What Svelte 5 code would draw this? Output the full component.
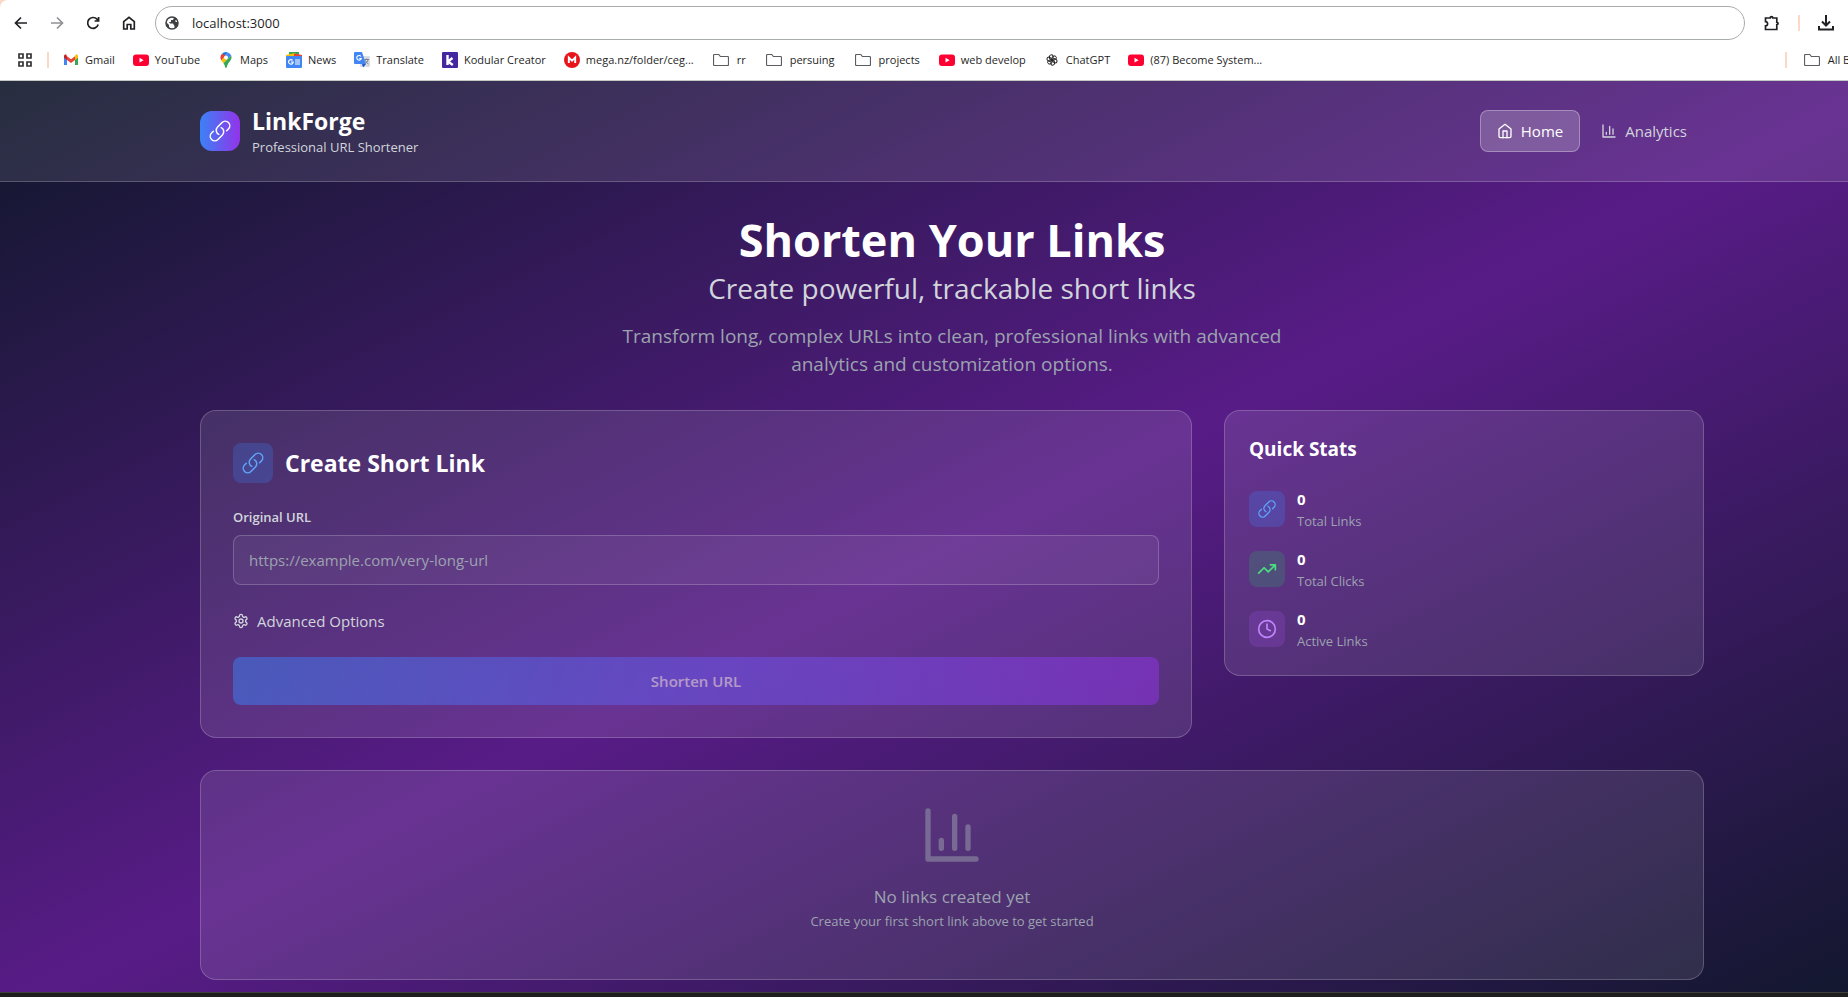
<script>
  const bookmarks = [
    { icon: 'gmail', label: 'Gmail' },
    { icon: 'youtube', label: 'YouTube' },
    { icon: 'maps', label: 'Maps' },
    { icon: 'news', label: 'News' },
    { icon: 'translate', label: 'Translate' },
    { icon: 'kodular', label: 'Kodular Creator' },
    { icon: 'mega', label: 'mega.nz/folder/ceg...' },
    { icon: 'folder', label: 'rr' },
    { icon: 'folder', label: 'persuing' },
    { icon: 'folder', label: 'projects' },
    { icon: 'youtube', label: 'web develop' },
    { icon: 'chatgpt', label: 'ChatGPT' },
    { icon: 'youtube', label: '(87) Become System...' }
  ];

  const stats = [
    { icon: 'link', tone: 'blue', value: 0, label: 'Total Links' },
    { icon: 'trend', tone: 'green', value: 0, label: 'Total Clicks' },
    { icon: 'clock', tone: 'purple', value: 0, label: 'Active Links' }
  ];

  let address = $state('localhost:3000');
  let url = $state('');
</script>

{#snippet favicon(name)}
  <svg class="favicon" viewBox="0 0 16 16" aria-hidden="true">
    {#if name === 'gmail'}
      <path d="M1 4v9h3V7z" fill="#4285f4" />
      <path d="M12 7v6h3V4z" fill="#34a853" />
      <path d="M12 4.500v3.500l3-2.300V4c0-1.500-1.500-2-2.400-1.200z" fill="#fbbc04" />
      <path d="M4 4.500v3.500L1 5.700V4c0-1.500 1.500-2 2.400-1.200z" fill="#c5221f" />
      <path d="M4 4.200l4 3 4-3V8l-4 3-4-3z" fill="#ea4335" />
    {:else if name === 'youtube'}
      <rect x="0" y="2.500" width="16" height="11.500" rx="3" fill="#ff0033" />
      <path d="M6.500 5.800v4.800L10.600 8.200z" fill="#fff" />
    {:else if name === 'maps'}
      <path d="M8 0a5.500 5.500 0 0 0-4.200 2L6 4.500 10 .4A5.500 5.500 0 0 0 8 0z" fill="#1a73e8" />
      <path d="M3.800 2A5.500 5.500 0 0 0 3.400 8.500L8.200 3z" fill="#ea4335" />
      <path d="M10 .4L6.500 4.300 9.500 7.200 13.200 3.500A5.500 5.500 0 0 0 10 .4z" fill="#4285f4" />
      <path d="M3.400 8.500L5.500 11.200 9.800 6.800 6.500 4.500z" fill="#fbbc04" />
      <path d="M13.200 3.500L5.500 11.200C7 13 7 16 8 16s1-3 2.700-5.200C12.500 8.500 14.300 6.500 13.200 3.500z" fill="#34a853" />
      <circle cx="8" cy="5.500" r="2" fill="#fff" />
    {:else if name === 'news'}
      <path d="M3 0h10v5H3z" fill="#34a853" />
      <path d="M0 3l9-2 2 4H0z" fill="#fbbc04" />
      <path d="M8 1.500l8 1.500v3H8z" fill="#ea4335" />
      <rect x="0" y="4" width="16" height="12" rx="1" fill="#4285f4" />
      <path d="M6.600 8.300A2.300 2.300 0 1 0 7.200 10H5M9 8h5M9 10h5M9 12h5" fill="none" stroke="#fff" stroke-width="1.200" />
    {:else if name === 'translate'}
      <rect x="6" y="4" width="10" height="11" rx="1" fill="#dadce0" />
      <path d="M1 0h7l4 12H1a1 1 0 0 1-1-1V1a1 1 0 0 1 1-1z" fill="#4285f4" />
      <path d="M8 12h4l-3 3.500z" fill="#1a57c8" />
      <path d="M7 4.500A2.300 2.300 0 1 0 7.300 6.500H5.300" fill="none" stroke="#fff" stroke-width="1.100" />
      <path d="M10.500 7.500h4.500M12.700 6.500v1M14 8c-.5 2-2 3-3 3.500M11.500 8.500c.5 1.500 2 3 3 3.500" fill="none" stroke="#6b7785" stroke-width=".9" />
    {:else if name === 'kodular'}
      <rect width="16" height="16" rx="1" fill="#4527a0" />
      <path d="M5.500 3v10M10.500 6L6 9.500l4.800 3.500" fill="none" stroke="#fff" stroke-width="2.400" />
    {:else if name === 'mega'}
      <circle cx="8" cy="8" r="8" fill="#e8141c" />
      <path d="M4.800 11V5.500L8 8.700l3.200-3.200V11" fill="none" stroke="#fff" stroke-width="1.900" />
    {:else if name === 'chatgpt'}
      <g fill="none" stroke="#222" stroke-width="1">
        {#each [0, 60, 120, 180, 240, 300] as turn}
          <path d="M8 8V5.300l1.900-1.300a1.900 1.900 0 0 1 2.200 2.800L9.300 8.600" transform="rotate({turn} 8 8)" />
        {/each}
      </g>
    {:else}
      <path d="M1.500 2.500h4.300l1.600 2h7.100a1 1 0 0 1 1 1v7a1 1 0 0 1-1 1h-13a1 1 0 0 1-1-1v-9a1 1 0 0 1 1-1z" fill="none" stroke="#5a5d61" stroke-width="1.200" />
    {/if}
  </svg>
{/snippet}

{#snippet icon(name)}
  <svg class="icon" viewBox="0 0 24 24" aria-hidden="true">
    {#if name === 'link'}
      <path d="M13.190 8.688a4.500 4.500 0 0 1 1.242 7.244l-4.500 4.500a4.500 4.500 0 0 1-6.364-6.364l1.757-1.757m13.350-.622l1.757-1.757a4.500 4.500 0 0 0-6.364-6.364l-4.500 4.500a4.500 4.500 0 0 0 1.242 7.244" />
    {:else if name === 'home'}
      <path d="M3 9l9-7 9 7v11a2 2 0 0 1-2 2H5a2 2 0 0 1-2-2z" />
      <path d="M9 22V12h6v10" />
    {:else if name === 'chart'}
      <path d="M3 3v18h18M8 17v-3M13 17V5M18 17V9" />
    {:else if name === 'trend'}
      <path d="M22 7l-8.500 8.500-5-5L2 17M16 7h6v6" />
    {:else if name === 'clock'}
      <circle cx="12" cy="12" r="10" />
      <path d="M12 6v6l4 2" />
    {:else if name === 'settings'}
      <path d="M12.220 2h-.44a2 2 0 0 0-2 2v.18a2 2 0 0 1-1 1.730l-.43.25a2 2 0 0 1-2 0l-.15-.08a2 2 0 0 0-2.730.73l-.22.38a2 2 0 0 0 .73 2.730l.15.1a2 2 0 0 1 1 1.720v.51a2 2 0 0 1-1 1.740l-.15.09a2 2 0 0 0-.73 2.730l.22.38a2 2 0 0 0 2.730.73l.15-.08a2 2 0 0 1 2 0l.43.25a2 2 0 0 1 1 1.730V20a2 2 0 0 0 2 2h.44a2 2 0 0 0 2-2v-.18a2 2 0 0 1 1-1.730l.43-.25a2 2 0 0 1 2 0l.15.08a2 2 0 0 0 2.730-.73l.22-.39a2 2 0 0 0-.73-2.730l-.15-.08a2 2 0 0 1-1-1.740v-.5a2 2 0 0 1 1-1.740l.15-.09a2 2 0 0 0 .73-2.730l-.22-.38a2 2 0 0 0-2.730-.73l-.15.08a2 2 0 0 1-2 0l-.43-.25a2 2 0 0 1-1-1.730V4a2 2 0 0 0-2-2z" />
      <circle cx="12" cy="12" r="3" />
    {/if}
  </svg>
{/snippet}

<div class="window">
  <div class="chrome">
    <div class="toolbar">
      <button class="tool" aria-label="Back">
        <svg viewBox="0 0 16 16"><path d="M14 8H3M8 2.500L2.500 8 8 13.500" /></svg>
      </button>
      <button class="tool muted" aria-label="Forward">
        <svg viewBox="0 0 16 16"><path d="M2 8h11M8 2.500L13.500 8 8 13.500" /></svg>
      </button>
      <button class="tool" aria-label="Reload">
        <svg viewBox="0 0 16 16"><path d="M13.200 9.500A5.400 5.400 0 1 1 12 4.200L13.300 5.700M13.600 2v4H9.600" /></svg>
      </button>
      <button class="tool" aria-label="Home page">
        <svg viewBox="0 0 16 16"><path d="M2.700 6.700L8 2.300l5.300 4.400v7.300H9.800V9.500H6.200V14H2.700z" /></svg>
      </button>
      <label class="address">
        <svg viewBox="0 0 16 16" aria-hidden="true">
          <circle cx="8" cy="8" r="6" fill="none" stroke="#3c4043" stroke-width="1.500" />
          <path d="M2 7l3 3v2l2 2C4 14 2 11 2 7zM9 2l1 1-1 2H7v2H5l1 1.500h3L10.500 11v2.500C13 12.500 14.500 9.500 14 7h-2l-1-1 2-2C12 2.500 10.500 2 9 2z" fill="#3c4043" />
        </svg>
        <input aria-label="Address" bind:value={address} />
      </label>
      <button class="tool" aria-label="Extensions">
        <svg viewBox="0 0 16 16"><path d="M1.500 3h4.700a1.300 1.300 0 0 1 2.600 0h4v4.300a1.300 1.300 0 0 1 0 2.600v4.600H1.500v-3.700a2.100 2.100 0 0 0 0-4.200z" /></svg>
      </button>
      <span class="rule"></span>
      <button class="tool" aria-label="Downloads">
        <svg class="heavy" viewBox="0 0 16 16"><path d="M8 0v10M4 6.500L8 10.500l4-4M1 11v3.500h14V11" /></svg>
      </button>
    </div>
    <div class="bookmarks">
      <button class="mark apps" aria-label="Apps">
        <svg class="favicon" viewBox="0 0 16 16"><path d="M2 2h4v4H2zM10 2h4v4h-4zM2 10h4v4H2zM10 10h4v4h-4z" fill="none" stroke="#333" stroke-width="1.700" /></svg>
      </button>
      <span class="rule"></span>
      {#each bookmarks as mark}
        <a class="mark" class:folder={mark.icon === 'folder'} href="#top">
          {@render favicon(mark.icon)}{mark.label}
        </a>
      {/each}
      <span class="rule last"></span>
      <button class="mark folder all">{@render favicon('folder')}All Bookmarks</button>
    </div>
  </div>

  <div class="viewport">
    <div class="page" id="top">
      <header>
        <div class="container bar">
          <div class="brand">
            <span class="logo">{@render icon('link')}</span>
            <div>
              <div class="name">LinkForge</div>
              <div class="tagline">Professional URL Shortener</div>
            </div>
          </div>
          <nav>
            <a class="active" href="#top">{@render icon('home')}Home</a>
            <a href="#top">{@render icon('chart')}Analytics</a>
          </nav>
        </div>
      </header>

      <main class="container">
        <section class="hero">
          <h1>Shorten Your Links</h1>
          <p class="lead">Create powerful, trackable short links</p>
          <p class="intro">Transform long, complex URLs into clean, professional links with advanced analytics and customization options.</p>
        </section>

        <div class="grid">
          <form class="card create" onsubmit={(event) => event.preventDefault()}>
            <div class="heading">
              <span class="badge blue">{@render icon('link')}</span>
              <h2>Create Short Link</h2>
            </div>
            <label class="caption" for="url">Original URL</label>
            <input id="url" class="field" type="url" placeholder="https://example.com/very-long-url" bind:value={url} />
            <button class="advanced" type="button">{@render icon('settings')}Advanced Options</button>
            <button class="submit" type="submit" disabled={!url}>Shorten URL</button>
          </form>

          <aside class="card stats">
            <h3>Quick Stats</h3>
            {#each stats as stat}
              <div class="stat">
                <span class="badge small {stat.tone}">{@render icon(stat.icon)}</span>
                <div>
                  <div class="value">{stat.value}</div>
                  <div class="label">{stat.label}</div>
                </div>
              </div>
            {/each}
          </aside>
        </div>

        <section class="card empty">
          {@render icon('chart')}
          <p class="none">No links created yet</p>
          <p class="hint">Create your first short link above to get started</p>
        </section>
      </main>
    </div>
  </div>
  <div class="taskbar"></div>
</div>

<style>
  :global(body) {
    overflow: hidden;
  }

  .window {
    --bleed: 56px;
    display: flex;
    flex-direction: column;
    width: calc(100% + var(--bleed));
    height: 100vh;
    background: #fbd9c8;
    font-family: 'Open Sans', 'Noto Sans', sans-serif;
    color: #fff;
  }

  .window *,
  .window {
    box-sizing: border-box;
  }

  h1, h2, h3, p {
    margin: 0;
  }

  button,
  input {
    font-family: inherit;
    border: 0;
    background: none;
    padding: 0;
    color: inherit;
  }

  a {
    color: inherit;
    text-decoration: none;
  }

  /* Browser frame */
  .chrome {
    flex: none;
    background: #fff;
    border-bottom: 1px solid #c5c9c4;
    border-top-left-radius: 8px;
    color: #1f1f1f;
  }

  .toolbar {
    display: flex;
    align-items: center;
    height: 46px;
    padding-left: 3px;
    padding-right: 60px;
  }

  .tool {
    display: grid;
    place-items: center;
    width: 36px;
    height: 32px;
  }

  .tool svg {
    width: 16px;
    height: 16px;
    fill: none;
    stroke: #202124;
    stroke-width: 1.7;
  }

  .tool svg.heavy {
    stroke-width: 2;
  }

  .tool.muted svg {
    stroke: #8f9194;
  }

  .address {
    display: flex;
    align-items: center;
    gap: 12px;
    flex: 1;
    height: 34px;
    margin: 0 9px 0 8px;
    padding: 0 8px;
    border: 1px solid #a9adaa;
    border-radius: 17px;
  }

  .address svg {
    width: 16px;
    height: 16px;
  }

  .address input {
    flex: 1;
    font-size: 13px;
    outline: 0;
  }

  .rule {
    flex: none;
    width: 2px;
    height: 16px;
    margin: 0 8px;
    background: #fbd9c8;
  }

  .bookmarks {
    display: flex;
    align-items: center;
    gap: 18px;
    height: 28px;
    margin-bottom: 6px;
    padding-left: 17px;
    padding-right: 2px;
  }

  .bookmarks .rule {
    margin: 0 -4px;
  }

  .bookmarks .rule.last {
    margin-left: auto;
    margin-right: -2px;
  }

  .mark {
    display: flex;
    align-items: center;
    gap: 6px;
    font-size: 11px;
    line-height: 16px;
    white-space: nowrap;
  }

  .mark.folder {
    gap: 8px;
    padding: 0 1px;
  }

  .favicon {
    flex: none;
    width: 16px;
    height: 16px;
  }

  /* Application */
  .viewport {
    flex: 1;
    min-height: 0;
    overflow: hidden;
  }

  .page {
    min-height: 100%;
    padding-bottom: 32px;
    background: linear-gradient(to bottom right, #0f172a, #581c87, #0f172a);
  }

  .container {
    width: 100%;
    max-width: 1536px;
    margin: 0 auto;
    padding-left: 16px;
    padding-right: 16px;
  }

  .icon {
    flex: none;
    width: 16px;
    height: 16px;
    fill: none;
    stroke: currentColor;
    stroke-width: 2;
    stroke-linecap: round;
    stroke-linejoin: round;
  }

  header {
    background: rgba(255, 255, 255, 0.1);
    border-bottom: 1px solid rgba(255, 255, 255, 0.2);
  }

  .bar {
    display: flex;
    align-items: center;
    justify-content: space-between;
    padding-top: 24px;
    padding-bottom: 24px;
  }

  .brand {
    display: flex;
    align-items: center;
    gap: 12px;
  }

  .logo {
    display: grid;
    place-items: center;
    width: 40px;
    height: 40px;
    border-radius: 12px;
    background: linear-gradient(to right, #3b82f6, #9333ea);
  }

  .logo .icon,
  .badge .icon {
    width: 24px;
    height: 24px;
    stroke-width: 1.5;
  }

  .name {
    font-size: 23px;
    font-weight: 700;
    line-height: 32px;
  }

  .tagline {
    font-size: 13px;
    line-height: 20px;
    color: #d1d5db;
  }

  nav {
    display: flex;
    gap: 4px;
  }

  nav a {
    display: flex;
    align-items: center;
    gap: 8px;
    padding: 8px 16px;
    border: 1px solid transparent;
    border-radius: 8px;
    font-size: 15px;
    line-height: 24px;
    color: #d1d5db;
  }

  nav a.active {
    color: #fff;
    font-weight: 500;
    background: rgba(255, 255, 255, 0.2);
    border-color: rgba(255, 255, 255, 0.3);
  }

  main {
    padding-top: 32px;
  }

  .hero {
    text-align: center;
    margin-bottom: 32px;
  }

  h1 {
    font-size: 45px;
    font-weight: 700;
    line-height: 52px;
  }

  .lead {
    margin-top: 4px;
    font-size: 28px;
    line-height: 36px;
    color: #d1d5db;
  }

  .intro {
    max-width: 672px;
    margin: 16px auto 0;
    font-size: 19px;
    line-height: 28px;
    color: #9ca3af;
  }

  .grid {
    display: grid;
    grid-template-columns: repeat(3, 1fr);
    align-items: start;
    gap: 32px;
    margin-bottom: 32px;
  }

  .card {
    border: 1px solid rgba(255, 255, 255, 0.2);
    border-radius: 16px;
    background: rgba(255, 255, 255, 0.1);
  }

  .create {
    grid-column: span 2;
    display: flex;
    flex-direction: column;
    padding: 32px;
  }

  .heading {
    display: flex;
    align-items: center;
    gap: 12px;
    margin-bottom: 24px;
  }

  h2 {
    font-size: 23px;
    font-weight: 700;
    line-height: 32px;
  }

  .badge {
    display: grid;
    place-items: center;
    width: 40px;
    height: 40px;
    border-radius: 8px;
  }

  .badge.small {
    width: 36px;
    height: 36px;
  }

  .badge.small .icon {
    width: 20px;
    height: 20px;
    stroke-width: 2;
  }

  .badge.small.blue .icon {
    stroke-width: 1.5;
  }

  .blue {
    color: #60a5fa;
    background: rgba(59, 130, 246, 0.25);
  }

  .green {
    color: #4ade80;
    background: rgba(34, 197, 94, 0.2);
  }

  .purple {
    color: #c084fc;
    background: rgba(168, 85, 247, 0.2);
  }

  .caption {
    margin-bottom: 8px;
    font-size: 13px;
    font-weight: 600;
    line-height: 20px;
    color: #d1d5db;
  }

  .field {
    height: 50px;
    margin-bottom: 24px;
    padding: 0 15px;
    border: 1px solid rgba(255, 255, 255, 0.2);
    border-radius: 8px;
    background: rgba(255, 255, 255, 0.05);
    font-size: 15px;
  }

  .field::placeholder {
    color: #9ca3af;
    opacity: 1;
  }

  .advanced {
    display: flex;
    align-items: center;
    align-self: flex-start;
    gap: 8px;
    margin-bottom: 24px;
    font-size: 15px;
    line-height: 24px;
    color: #d1d5db;
  }

  .submit {
    height: 48px;
    border-radius: 8px;
    background: linear-gradient(to right, #3b82f6, #9333ea);
    font-size: 15px;
    font-weight: 600;
    line-height: 24px;
  }

  .submit:disabled {
    opacity: 0.5;
  }

  .stats {
    display: flex;
    flex-direction: column;
    gap: 16px;
    padding: 24px;
  }

  h3 {
    margin-bottom: 8px;
    font-size: 19px;
    font-weight: 700;
    line-height: 28px;
  }

  .stat {
    display: flex;
    align-items: center;
    gap: 12px;
  }

  .value {
    font-size: 15px;
    font-weight: 700;
    line-height: 24px;
  }

  .label {
    font-size: 13px;
    line-height: 20px;
    color: #9ca3af;
  }

  .empty {
    display: flex;
    flex-direction: column;
    align-items: center;
    padding: 32px 32px 48px;
    color: #9ca3af;
  }

  .empty .icon {
    width: 64px;
    height: 64px;
    margin-bottom: 16px;
    opacity: 0.5;
  }

  .none {
    font-size: 17px;
    line-height: 28px;
  }

  .hint {
    font-size: 13px;
    line-height: 20px;
  }

  .taskbar {
    flex: none;
    height: 5px;
    border-top: 1px solid #3f3f3c;
    background: #1e1e1e;
  }
</style>
